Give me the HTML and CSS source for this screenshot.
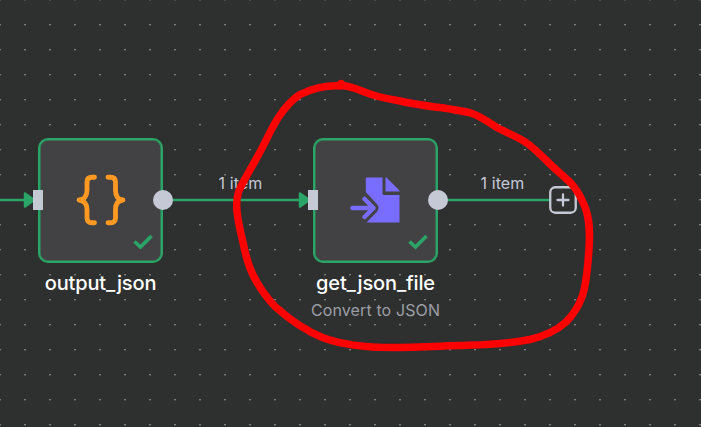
FILE: index.html
```html
<!DOCTYPE html>
<html lang="en">
<head>
<meta charset="utf-8">
<title>Workflow</title>
<link rel="stylesheet" href="styles.css">
</head>
<body>
<main class="canvas">
  <svg class="edges" width="701" height="427" viewBox="0 0 701 427">
    <path class="wire" d="M0 200H26M163 200H301M438 200H550"/>
    <path class="arrow" d="M25 193.500L34 200L25 206.500ZM300 193.500L309 200L300 206.500Z"/>
  </svg>
  <span class="edge-label first">1 item</span>
  <span class="edge-label second">1 item</span>

  <section class="node output">
    <div class="card">
      <i class="port-in"></i><i class="port-out"></i>
      <svg class="icon" width="50" height="52" viewBox="0 0 50 52">
        <path class="brace" d="M18.500 3.250H16Q11 3.250 11 8.250V16.500C11 22 8 25.500 3 26C8 26.500 11 30 11 35.500V43.750Q11 48.750 16 48.750H18.500M32 3.250H34.500Q39.500 3.250 39.500 8.250V16.500C39.500 22 42 25.500 47 26C42 26.500 39.500 30 39.500 35.500V43.750Q39.500 48.750 34.500 48.750H32"/>
      </svg>
      <svg class="check" width="20" height="16" viewBox="0 0 20 16"><path d="M1.500 7.500L7.500 13L18.500 2"/></svg>
    </div>
    <h2 class="title">output_json</h2>
  </section>

  <section class="node file">
    <div class="card">
      <i class="port-in"></i><i class="port-out"></i>
      <svg class="icon" width="50" height="46" viewBox="0 0 50 46">
        <path class="paper" d="M16.500 .5H32.500V16.500Q32.500 18 34 18H49.500V45.500H16.500Q15.800 45.500 15.800 44.800V1.200Q15.800 .5 16.500 .5Z"/>
        <path class="paper" d="M35.500 .5H36.500L49.500 13.500V14.500H35.500Z"/>
        <path class="gap" d="M12 18.500L23.500 31L12 43"/>
        <path class="into" d="M2.500 31H23.500M14.500 22L23.500 31L14.500 40"/>
      </svg>
      <svg class="check" width="20" height="16" viewBox="0 0 20 16"><path d="M1.500 7.500L7.500 13L18.500 2"/></svg>
    </div>
    <h2 class="title">get_json_file</h2>
    <p class="subtitle">Convert to JSON</p>
  </section>

  <button class="add" aria-label="Add node"><svg width="28" height="28" viewBox="0 0 28 28"><rect x="1.250" y="1.250" width="25.500" height="25.500" rx="5"/><path d="M14 8.500V19.500M8.500 14H19.500"/></svg></button>

  <svg class="marker" width="701" height="427" viewBox="0 0 701 427">
    <path d="M342 85.800C328 85 312 88.500 300 94.500C291 100 284 109 278 118C271 129 266 141 260 152L246 177C240 188 236.500 193 236.700 206C237 219 240 229 242.700 241C245 253 248 265 253.500 276C259 287 266 297 275 306.500C289 319 306 331 323 337.700C343 345 365 347.500 392 347.500C417 347.500 442 346 467 345.300C490 344.500 512 343 530 339.500C545 336 557 330 566 322C574 314 579 305 582 297C587 283 588 262 589 249C590 233 590 220 585 207C581 197 577 190 571.700 184C565 177 557 171 550 164C542 156 534 148 526 142.500C516 136 505 132 496.500 127.300C488 122 482 117 472 113.500C462 110.500 450 109 435 107C423 105.500 412 103.500 400 101C388 99 379 97 370 94C361 91 354 87 345 86M341 83.500V86"/>
  </svg>
</main>
</body>
</html>
```

FILE: styles.css
```css
body {
  margin: 0;
  background: #2e302f;
  font-family: Inter, "Liberation Sans", sans-serif;
}

.canvas {
  position: relative;
  width: 701px;
  height: 427px;
  overflow: hidden;
  background-image:
    conic-gradient(from 0deg at 2px 1px, transparent 75%, #7b7d7c 0),
    conic-gradient(from 0deg at 2px 2px, transparent 75%, #4b4d4c 0);
  background-size: 25px 25px;
  background-position: 24px 24px;
}

.edges,
.marker {
  position: absolute;
  inset: 0;
}

.marker { pointer-events: none; }

.wire { stroke: #2ba467; stroke-width: 2.3; }
.arrow { fill: #2ba467; stroke: #2ba467; stroke-width: 2.5; stroke-linejoin: round; }

.marker path {
  fill: none;
  stroke: #f00;
  stroke-width: 7.5;
  stroke-linecap: round;
  stroke-linejoin: round;
}

.edge-label {
  position: absolute;
  top: 173px;
  font-size: 16px;
  line-height: 20px;
  letter-spacing: 0.1px;
  color: #c5c9d6;
  white-space: nowrap;
}

.first { left: 218.5px; }
.second { left: 480.5px; }

.node {
  position: absolute;
  top: 137.5px;
  width: 125px;
  display: flex;
  flex-direction: column;
  align-items: center;
}

.output { left: 38px; }
.file { left: 313px; }

.card {
  position: relative;
  box-sizing: border-box;
  width: 125px;
  height: 125px;
  border: 2px solid #2ba467;
  border-radius: 10px;
  box-shadow: inset 0 0 0 0.5px #2ba467;
  background: #424244;
  display: grid;
  place-items: center;
}

.port-in,
.port-out {
  position: absolute;
  background: #c5c9d6;
}

.port-in { left: -7px; top: 50.5px; width: 10px; height: 20px; }
.port-out { right: -12px; top: 50.5px; width: 20px; height: 20px; border-radius: 50%; }

.icon { display: block; }

.brace {
  fill: none;
  stroke: #ff9922;
  stroke-width: 4.8;
  stroke-linecap: round;
  stroke-linejoin: round;
}

.paper { fill: #786dff; }

.gap {
  fill: none;
  stroke: #424244;
  stroke-width: 10;
  stroke-linejoin: round;
}

.into {
  fill: none;
  stroke: #786dff;
  stroke-width: 4.5;
  stroke-linecap: round;
  stroke-linejoin: round;
}

.file .icon { margin-right: 1px; }

.check {
  position: absolute;
  right: 8px;
  bottom: 11px;
  fill: none;
  stroke: #2ba467;
  stroke-width: 3.6;
}

.title {
  margin: 8px 0 0;
  font-size: 20px;
  font-weight: 550;
  line-height: 25px;
  letter-spacing: -0.15px;
  color: #fff;
  white-space: nowrap;
}

.subtitle {
  margin: 4px 0 0;
  font-size: 16px;
  line-height: 20px;
  letter-spacing: 0.12px;
  color: #9c9ea6;
  white-space: nowrap;
}

.add {
  position: absolute;
  left: 549px;
  top: 186px;
  width: 28px;
  height: 28px;
  padding: 0;
  border: 0;
  background: none;
}

.add svg { display: block; fill: #2e302f; stroke: #c5c9d6; stroke-width: 2.3; stroke-linecap: round; }
```
